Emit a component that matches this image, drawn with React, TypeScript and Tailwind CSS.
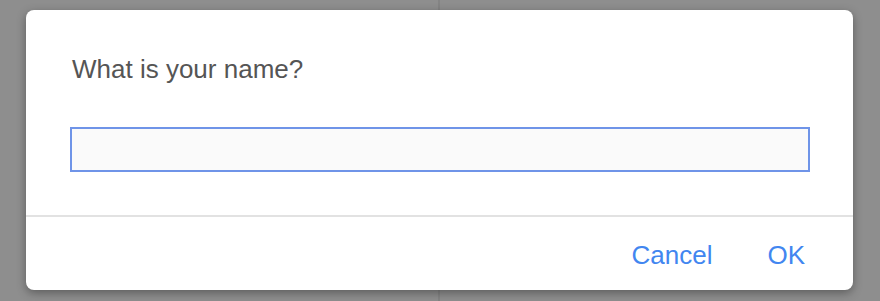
import React from "react";

export default function App() {
  return (
    <div
      className="relative w-[880px] h-[301px] overflow-hidden bg-[#8e8e8e] pl-[26px] pt-[10px]"
      style={{ fontFamily: '"Liberation Sans", Arial, sans-serif' }}
    >
      <div className="absolute left-[438px] top-0 h-full w-[2px] bg-[#848484]" />
      <div className="relative flex h-[280px] w-[827px] flex-col rounded-[8px] bg-white shadow-[0_3px_10px_rgba(0,0,0,0.35)]">
        <div className="pl-[46px] pt-[44px] text-[26px] leading-[30px] text-[#555555]">
          What is your name?
        </div>
        <div className="pl-[44px] pt-[43px]">
          <input
            type="text"
            className="block h-[45px] w-[740px] border-2 border-[#6f94e8] bg-[#fafafa] outline-none"
          />
        </div>
        <div className="mt-[43px] h-[2px] w-full bg-[#e2e2e2]" />
        <div className="flex justify-end gap-[55px] pr-[48px] pt-[23px] text-[26px] leading-[30px] text-[#4286f0]">
          <button className="bg-transparent p-0">Cancel</button>
          <button className="bg-transparent p-0">OK</button>
        </div>
      </div>
    </div>
  );
}
